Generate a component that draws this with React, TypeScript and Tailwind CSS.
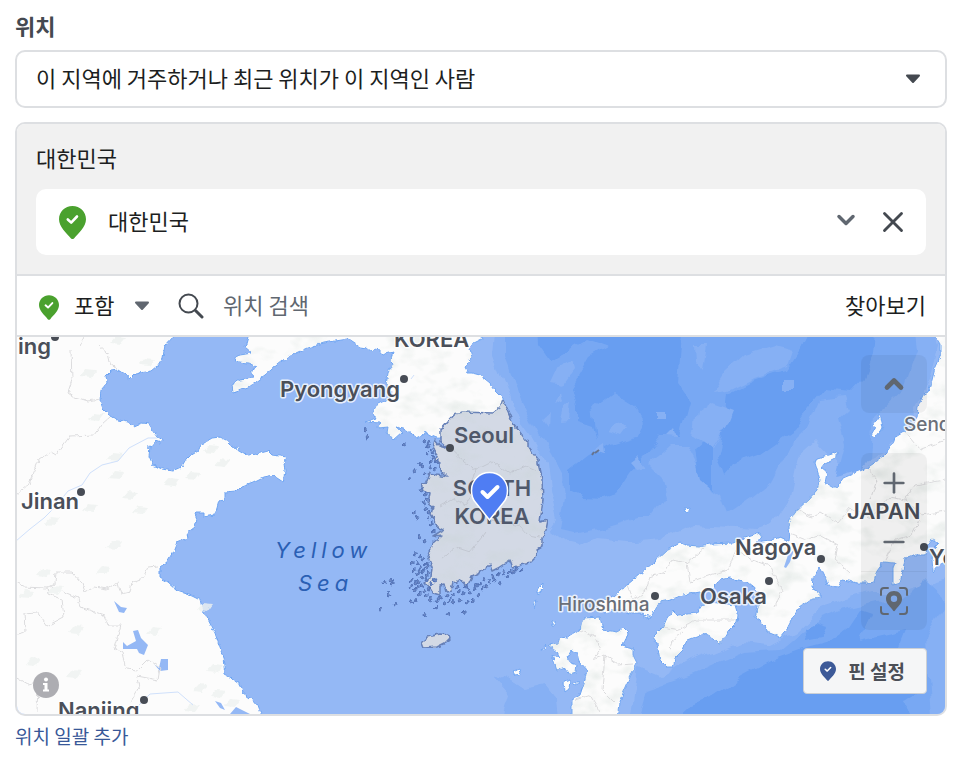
import { useState } from 'react';
import { ChevronDown, ChevronUp, Minus, Plus, X } from 'lucide-react';

const MAINLAND =
  'M10 330H175L173 337L165 346L163 358L158 366L152 371L140 373L135 374L130 379L124 374L118 370L111 371L106 376L107 383L101 390L100 400L103 409L110 416L118 420L128 422L135 426L142 423L149 424L153 430L158 437L163 440L161 443L155 441L150 447L149 456L153 465L162 469L173 471L182 467L186 460L190 456L198 451L201 445L212 438L220 437L226 440L232 446L240 450L248 455L257 454L268 451L272 455L287 457L284 463L285 472L283 482L277 478L273 475L263 477L253 482L242 486L236 492L225 493L225 500L219 501L215 515L203 517L203 512L197 512L195 514L197 519L195 527L187 533L188 538L177 542L173 552L167 562L160 567L160 577L168 582L177 590L192 595L200 599L202 608L215 633L223 657L225 675L240 683L243 693L253 700L258 706L263 720H10Z';

const NORTH_KOREA =
  'M247 330L248 337L245 347L252 353L240 355L235 357L238 362L248 363L257 367L250 372L253 378L240 380L232 385L233 392L248 387L265 375L277 365L287 357L307 348L323 343L348 339L360 347L367 348L372 352L377 348L383 355L393 352L390 360L393 363L388 373L386 385L392 394L387 400L377 405L373 413L376 418L365 422L380 423L378 428L388 427L387 433L393 440L402 432L396 427L407 430L417 438L427 433L434 437L446 440L480 425L503 410L503 398L495 390L490 383L480 375L472 373L468 373L465 367L472 357L470 350L473 343L485 337V330Z';

const SOUTH_KOREA =
  'M503 400L500 408L493 413L462 412L454 414L447 422L440 430L440 442L446 447L439 445L435 440L433 447L437 453L435 460L440 463L441 471L447 477L437 475L430 473L427 482L421 484L423 490L430 493L428 503L433 507L431 514L435 520L437 527L443 530L433 536L442 535L433 543L428 557L432 567L431 577L425 583L433 593L440 595L440 585L444 584L446 592L451 591L453 583L461 580L467 587L472 576L480 572L490 565L492 571L498 568L510 560L513 568L520 565L530 563L535 558L537 550L542 547L542 538L546 530L548 520L540 522L543 500L542 480L538 463L538 460L528 447L528 443L513 423Z';

const HONSHU =
  'M598 602L613 597L627 585L633 580L653 563L667 550L680 543L687 545L700 546L710 544L733 543L745 538L760 533L762 537L755 543L770 541L780 537L789 541L790 533L788 522L797 510L808 500L817 490L820 480L818 473L815 463L817 458L828 455L837 452L837 457L825 463L821 468L827 473L825 483L832 487L838 487L843 478L867 468L883 457L893 443L895 437L903 432L912 427L917 418L918 407L923 395L928 392L932 380L935 368L940 357L940 345L935 337V330H960V562L946 562L938 566L933 572L932 560L933 549L939 543L932 539L927 546L926 555L913 555L905 558L904 564L903 570L900 583L893 585L893 568L895 563L883 562L877 570L874 582L870 583L857 583L843 580L838 586L828 585L825 577L820 567L813 578L812 587L820 593L820 598L810 600L800 607L793 617L788 627L780 637L767 632L765 625L755 617L757 610L760 600L760 593L753 587L747 582L730 578L720 580L710 590L700 592L683 595L670 600L660 602L656 608L650 617L642 613L630 613L620 609L603 613L598 610Z';

const KYUSHU =
  'M583 618L600 617L603 630L617 632L623 628L628 633L625 642L621 645L633 648L633 655L637 663L630 677L623 693L620 703L618 720H572V700L580 695L585 680L587 670L580 662L578 653L572 650L568 657L570 663L577 665L576 673L570 675L565 668L557 671L552 655L558 658L558 653L548 645L558 643L560 637L567 638L580 630Z';

const SHIKOKU =
  'M673 610L678 615L697 613L702 605L710 602L735 605L738 615L737 623L727 633L720 645L713 638L703 633L700 635L687 640L683 650L675 658L673 667L667 667L660 660L657 643L653 637L663 627L667 618Z';

const JAPAN_ISLANDS =
  'M880 413L883 427L875 437L871 435L875 428L872 426L878 418ZM538 588L543 583L542 592L538 595ZM534 602L537 600L535 608ZM552 621H555V625H552ZM513 672L519 669L521 674L515 675ZM564 682L570 680L569 689L565 692ZM572 684L578 681L578 685ZM542 650L546 644L545 650ZM684 509L689 508L689 512L685 513ZM642 616L650 616L648 619ZM640 602L643 601L643 604Z';

const JEJU = 'M421 643L427 637L440 634L449 635L450 638L445 643L437 647L423 648Z';

// [x, y] of the islets scattered off the southern and western coasts
const ISLETS = [
  [365, 429], [367, 437], [403, 444], [424, 441], [428, 443], [430, 449], [427, 453], [432, 457], [436, 461], [419, 464],
  [414, 470], [408, 478], [422, 466], [429, 467], [434, 469], [424, 473], [421, 490], [425, 494], [427, 499], [423, 502],
  [413, 512], [416, 517], [428, 512], [430, 523], [419, 537], [424, 540], [432, 531], [415, 553], [419, 556], [411, 563],
  [417, 562], [422, 559], [425, 563], [420, 567], [424, 569], [413, 570], [428, 572], [417, 574], [410, 580], [415, 583],
  [421, 577], [425, 576], [418, 582], [410, 586], [414, 590], [422, 585], [428, 588], [419, 594], [411, 601], [415, 600],
  [425, 596], [430, 599], [436, 601], [435, 607], [441, 597], [447, 596], [452, 595], [444, 603], [453, 602], [458, 591],
  [463, 593], [459, 600], [466, 602], [470, 592], [474, 589], [479, 583], [484, 579], [478, 595], [471, 600], [486, 586],
  [492, 577], [497, 574], [503, 572], [507, 576], [512, 572], [516, 569], [499, 583], [521, 569], [384, 582], [391, 580],
  [392, 583], [388, 594], [395, 604], [380, 609], [425, 615], [448, 614], [463, 612], [434, 580], [456, 587], [465, 586],
  [427, 446], [433, 452], [430, 461], [426, 508], [428, 518], [422, 571], [426, 580], [430, 584], [417, 587], [424, 591],
  [438, 598], [449, 600], [468, 588], [476, 585], [481, 588], [489, 581], [494, 580], [509, 571], [427, 566], [418, 570],
];

const CITY_DOTS = [
  [81, 492], [404, 379], [450, 448], [655, 596], [769, 581], [821, 559], [924, 547], [144, 700], [55, 337],
];

const SHADES = [
  [35, 345], [118, 340], [88, 373], [147, 362], [96, 417], [115, 457], [90, 508], [130, 495], [117, 475], [171, 482],
  [193, 476], [52, 521], [140, 510], [44, 573], [114, 545], [103, 570], [55, 590], [27, 594], [205, 607], [76, 630],
  [154, 631], [33, 662], [74, 674], [215, 668], [200, 688], [218, 694], [232, 703], [192, 708], [211, 449], [222, 463],
];

interface IconProps {
  className: string;
}

function MarkerIcon({ className }: IconProps) {
  return (
    <svg viewBox="0 0 27 33" className={className} aria-hidden="true">
      <path
        d="M13.500 0C6 0 0 5.800 0 13.200C0 21 7.600 27 11.800 32.200Q13.500 34 15.200 32.200C19.400 27 27 21 27 13.200C27 5.800 21 0 13.500 0Z"
        fill="currentColor"
      />
      <path d="M8.800 13.500L12.200 16.600L18 10.500" fill="none" stroke="white" strokeWidth="2.600" strokeLinecap="round" strokeLinejoin="round" />
    </svg>
  );
}

function CaretIcon({ className }: IconProps) {
  return (
    <svg viewBox="0 0 16 10" className={className} aria-hidden="true">
      <path d="M2 1.500H14L8 8Z" fill="currentColor" stroke="currentColor" strokeWidth="2" strokeLinejoin="round" />
    </svg>
  );
}

function MapCanvas() {
  return (
    <svg
      viewBox="17 337 928 377"
      preserveAspectRatio="xMidYMid slice"
      className="block h-full w-full"
      role="img"
      aria-label="대한민국 지도"
    >
      <defs>
        <filter id="coast" x="0" y="0" width="100%" height="100%">
          <feTurbulence type="fractalNoise" baseFrequency="0.180" numOctaves="2" seed="4" result="noise" />
          <feDisplacementMap in="SourceGraphic" in2="noise" scale="5" xChannelSelector="R" yChannelSelector="G" />
        </filter>
        <filter id="depth" x="0" y="0" width="100%" height="100%">
          <feTurbulence type="fractalNoise" baseFrequency="0.050" numOctaves="2" seed="9" result="noise" />
          <feDisplacementMap in="SourceGraphic" in2="noise" scale="12" xChannelSelector="R" yChannelSelector="G" />
        </filter>
        <filter id="relief" x="0" y="0" width="100%" height="100%">
          <feTurbulence type="fractalNoise" baseFrequency="0.040 0.060" numOctaves="3" seed="21" />
          <feColorMatrix values="0 0 0 0 0.550  0 0 0 0 0.640  0 0 0 0 0.600  2.200 0 0 0 -1.050" result="hills" />
          <feComposite in="hills" in2="SourceAlpha" operator="in" />
        </filter>
      </defs>

      <rect x="0" y="320" width="980" height="410" fill="#94b8f5" />

      {/* Water depth */}
      <g filter="url(#depth)">
        <path
          fill="#86b0f4"
          d="M495 320L492 353L503 383L513 410L530 433L547 463L550 490L557 520L550 530L567 543L580 546L597 538L637 542L660 540L690 525L757 528L773 523L790 497L798 457L817 440L845 470L885 450L912 418L930 375L938 345L930 320Z"
        />
        <path
          fill="#78a8f3"
          d="M505 320V357L520 397L537 430L550 453L563 477L565 497L560 530L573 533L603 527L637 517L653 517L667 497L662 477L648 463L670 445L687 445L700 470L710 490L720 497L727 515L753 497L772 482L787 453L793 440L810 423L820 400L843 397L847 410L838 418L845 445L837 477L860 470L870 457L873 417L903 390L917 350L913 320Z"
        />
        <path
          fill="#679ef1"
          d="M537 320L538 345L550 362L562 355L570 350L587 340L607 347L590 357L577 380L573 387L578 407V422L593 427L597 440L593 407L613 392L637 407L645 422L637 437L610 445L587 457L570 470V490L583 497L603 498L617 493L630 473L650 450L660 437L680 437L690 400L678 383L683 320ZM800 350L810 330L875 320L872 355L862 380L850 393L823 390L807 410L793 430L760 453L733 463L723 475L717 457L723 430L727 393L753 380L773 373L787 370ZM700 480L695 450L712 435L712 490Z"
        />
        <path
          fill="#86b0f4"
          d="M551 383L558 368L572 361L574 369L562 385ZM561 420L565 405L572 404L570 419ZM553 405L561 392L563 401ZM542 420L548 415L547 427ZM606 431L615 423L628 427L622 435ZM592 452L603 445L604 456ZM629 462L636 457L646 468L636 470ZM657 412H664V419H657ZM668 437L675 430L678 438ZM712 392L725 372L745 354L775 345L793 350L788 365L752 378L727 390ZM694 345H708L704 372L695 362ZM693 435L697 412L712 402L734 410L728 425L713 449ZM785 380H793V388H785Z"
        />
        <path fill="#86b0f4" d="M628 730L637 668L660 678L690 660L715 652L740 642L770 645L795 632L820 608L870 592L902 592L960 575V730ZM492 675L510 680L525 690L545 685L557 700L560 730H500L510 695Z" />
        <path fill="#78a8f3" d="M636 730L647 690L690 675L720 662L745 652L780 650L810 625L840 610L875 602L905 600L925 580L946 600L925 640L932 730Z" />
        <path fill="#679ef1" d="M664 730L690 705L715 695L743 676L777 658L800 650L827 643L848 628L860 610L872 614L860 640L905 630L895 655L920 690L905 700L920 730ZM805 627L815 622L828 626L822 637L807 640Z" />
      </g>

      <path d="M595 453L599 450M592 455L594 452" stroke="#66748f" strokeWidth="2" />

      {/* Land */}
      <g filter="url(#coast)" fill="#fcfcfc" stroke="#6fa5f2" strokeWidth="1">
        <path d={MAINLAND} />
        <path d={NORTH_KOREA} />
        <path d={HONSHU} />
        <path d={KYUSHU} />
        <path d={SHIKOKU} />
        <path d={JAPAN_ISLANDS} />
      </g>
      <path d={SOUTH_KOREA + JEJU} filter="url(#coast)" fill="#d3d9e5" stroke="#6680b8" strokeWidth="1.500" strokeLinejoin="round" />

      <g filter="url(#relief)" opacity="0.400">
        <path d={NORTH_KOREA} />
        <path d={HONSHU} />
        <path d={KYUSHU} />
        <path d={SHIKOKU} />
        <path d={SOUTH_KOREA} opacity="0.700" />
      </g>
      <g filter="url(#coast)" fill="#eef2f0" opacity="0.800">
        {SHADES.map(([x, y]) => (
          <path key={`${x}-${y}`} d={`M${x - 8} ${y + 3}L${x - 2} ${y - 4}L${x + 8} ${y - 3}L${x + 3} ${y + 4}Z`} />
        ))}
      </g>

      {/* Islets */}
      <g filter="url(#coast)" fill="#6f8bc6" stroke="#5475ba" strokeWidth="1">
        {ISLETS.map(([x, y], index) => (
          <path key={index} d={`M${x - 1} ${y + 1}L${x + (index % 3)} ${y - 2}L${x + 2} ${y + 1}L${x} ${y + 2}Z`} />
        ))}
      </g>

      {/* Lakes and rivers */}
      <g fill="#94b8f5">
        <path d="M114 601L121 607L127 608L124 613L119 612ZM133 631L138 630L141 638L148 645L144 655L139 653L137 649L123 649V642L127 646L136 641ZM154 664L159 668L161 659H168V670L160 671ZM215 701L221 703L225 710L220 708ZM230 714L236 707L250 714ZM784 567L788 555L794 550L790 562L786 568Z" />
        <path
          fill="none"
          stroke="#cfe0fb"
          d="M16 541L30 529L44 518L55 507L68 491L82 485L90 473L102 465L118 461L129 448L148 438L157 438M138 706L150 694L178 692L193 705M411 379L414 375"
        />
      </g>

      {/* Province borders */}
      <g fill="none" stroke="#dcdcde" strokeWidth="1" filter="url(#coast)">
        <path d="M16 495L29 484L39 460L51 452L56 455L70 436L94 435L102 424L110 417M71 350L72 380L68 392L75 397L88 401L100 399M80 345L84 337M98 345L108 354L110 363L117 368M16 580L22 587L47 588L55 584L56 572L72 572L82 583L85 592L95 587L107 589L118 583L121 594L130 592L132 582L143 578L148 567L158 566M47 588L48 594L62 600L64 617L47 626L37 612L24 613L25 632L17 634M62 591L78 598L80 607L104 615L108 625L121 625L114 648L122 653L126 669L138 670L148 660L160 668L158 680L137 676L139 688L130 703M16 677L28 684L38 682L37 712" />
        <path
          stroke="#c3c8d2"
          d="M450 448L465 462L476 470L492 462L510 473L526 466L537 471M440 506L453 499L465 505L474 492L486 505L489 520L505 522L520 526L528 535L540 537M440 560L455 547L470 552L486 532M476 470L470 485L482 494"
        />
        <path d="M627 585L633 600L645 592L650 577L665 572L672 560L687 563L705 548M687 563L690 582L710 575L728 570L736 550M736 550L752 560L770 566L782 590L775 607M790 534L805 540L820 535L838 545L835 560L850 573M797 510L812 517L820 512L838 523L850 508L872 518L890 497L905 500L915 485L945 480M867 468L877 480L870 500M905 432L920 450L945 440M905 500L922 515L945 511M885 560L895 540L912 535L920 520M663 627L680 630L695 620L737 620M670 650L672 640L683 632M580 630L595 637L600 650L592 660L605 655L618 665L633 664M605 655L602 690L615 703M575 700L590 695L600 712" />
      </g>

      <g fill="#474c55">
        {CITY_DOTS.map(([x, y]) => (
          <circle key={`${x}-${y}`} cx={x} cy={y} r="4" />
        ))}
      </g>

      <g
        className="font-['Inter','Liberation_Sans',sans-serif] text-[22px] font-semibold"
        fill="#4a4f59"
        stroke="#ffffff"
        strokeOpacity="0.800"
        strokeWidth="3"
        strokeLinejoin="round"
        paintOrder="stroke"
      >
        <text x="18" y="354">ing</text>
        <text x="280" y="397">Pyongyang</text>
        <text x="21" y="509">Jinan</text>
        <text x="58" y="718">Nanjing</text>
        <text x="735" y="555">Nagoya</text>
        <text x="700" y="604">Osaka</text>
        <text x="929" y="565">Yokohama</text>
        <text x="394" y="347">KOREA</text>
        <text x="847" y="519">JAPAN</text>
        <g stroke="none" fill="#4f586b">
          <text x="454" y="443">Seoul</text>
          <text x="492" y="496" textAnchor="middle">SOUTH</text>
          <text x="492" y="524" textAnchor="middle">KOREA</text>
        </g>
        <g className="text-[19px] font-medium" fill="#6a6f78">
          <text x="558" y="611">Hiroshima</text>
          <text x="904" y="431">Sendai</text>
        </g>
        <g className="text-[22px] font-normal italic tracking-[5px]" fill="#2a5fb4" stroke="none">
          <text x="275" y="558">Yellow</text>
          <text x="298" y="591">Sea</text>
        </g>
      </g>

      <path
        d="M489.500 520L476 503C473 500 471.500 495 471.500 490.500A18 18 0 0 1 507.500 490.500C507.500 495 506 500 503 503Z"
        fill="#4f7df3"
        stroke="white"
        strokeWidth="1.500"
      />
      <path d="M482.500 492L487.500 497L497.500 487" fill="none" stroke="white" strokeWidth="4" strokeLinecap="round" strokeLinejoin="round" />
    </svg>
  );
}

function LocationMap() {
  return (
    <div className="relative h-[377px] overflow-hidden">
      <MapCanvas />

      <button
        type="button"
        aria-label="지도 접기"
        className="absolute top-[18px] right-[18px] flex h-[58px] w-[66px] items-center justify-center rounded-lg bg-black/5 text-[#606770]"
      >
        <ChevronUp className="size-7" strokeWidth={4} />
      </button>

      <div className="absolute top-[116px] right-[18px] flex w-[66px] flex-col overflow-hidden rounded-lg bg-black/5 text-[#606770]">
        <button type="button" aria-label="확대" className="flex h-[59px] items-center justify-center">
          <Plus className="size-8" strokeWidth={2} />
        </button>
        <button type="button" aria-label="축소" className="flex h-[59px] items-center justify-center">
          <Minus className="size-8" strokeWidth={2} />
        </button>
        <button type="button" aria-label="현재 위치" className="flex h-[59px] items-center justify-center border-t border-black/5">
          <svg viewBox="0 0 28 28" className="size-7" fill="none" stroke="currentColor" strokeWidth="2" strokeLinecap="round" aria-hidden="true">
            <path d="M1 8V4Q1 1 4 1H8M20 1H24Q27 1 27 4V8M27 20V24Q27 27 24 27H20M8 27H4Q1 27 1 24V20" />
            <path
              fill="currentColor"
              stroke="none"
              fillRule="evenodd"
              d="M14 4C9.300 4 6 7.500 6 12C6 17 11 20 13 23.500Q14 25 15 23.500C17 20 22 17 22 12C22 7.500 18.700 4 14 4ZM14 8.500A3.200 3.200 0 1 1 14 14.900A3.200 3.200 0 1 1 14 8.500Z"
            />
          </svg>
        </button>
      </div>

      <button type="button" aria-label="지도 정보" className="absolute bottom-4 left-4 size-[26px] rounded-full bg-[#adadb2] text-white">
        <svg viewBox="0 0 26 26" className="size-full" fill="currentColor" aria-hidden="true">
          <circle cx="13" cy="7.500" r="2" />
          <path d="M10 11H14.500V17.500H16V19.500H10V17.500H11.500V13H10Z" />
        </svg>
      </button>

      <button
        type="button"
        className="absolute right-[18px] bottom-5 flex h-[46px] items-center gap-3 rounded-sm border border-[#ccd0d5] bg-[#f5f6f7] pr-[21px] pl-4 text-[19px] font-bold text-[#4b4f56]"
      >
        <MarkerIcon className="h-5 w-4 text-[#3d5a98]" />
        핀 설정
      </button>
    </div>
  );
}

function App() {
  const [query, setQuery] = useState('');

  return (
    <main className="bg-white pt-[10px] pr-[19px] pb-2 pl-[15px] font-['Noto_Sans_CJK_KR',sans-serif] text-[22px] leading-[30px] text-[#1c1e21]">
      <label htmlFor="location-type" className="mb-[10px] block font-bold text-[#444950]">
        위치
      </label>
      <div className="relative mb-[14px]">
        <select
          id="location-type"
          className="block h-[58px] w-full appearance-none rounded-[10px] border-2 border-[#dddfe2] bg-white pr-14 pb-1 pl-[19px]"
        >
          <option>이 지역에 거주하거나 최근 위치가 이 지역인 사람</option>
        </select>
        <CaretIcon className="pointer-events-none absolute top-6 right-[26px] h-[10px] w-4 text-[#444950]" />
      </div>

      <section className="overflow-hidden rounded-[10px] border-2 border-[#dddfe2]">
        {/* Selected locations */}
        <div className="border-b-2 border-[#dddfe2] bg-[#f1f1f1] px-[19px] pt-[18px] pb-[19px]">
          <h2 className="mb-[17px]">대한민국</h2>
          <div className="flex h-[66px] items-center rounded-[10px] bg-white pr-4 pl-[23px]">
            <MarkerIcon className="h-[33px] w-[27px] text-[#4aa12e]" />
            <span className="ml-[22px] flex-1 pb-1">대한민국</span>
            <button type="button" aria-label="반경 옵션" className="mr-4 pb-1 text-[#606770]">
              <ChevronDown className="size-7" strokeWidth={3} />
            </button>
            <button type="button" aria-label="삭제" className="text-[#444950]">
              <X className="size-[34px]" strokeWidth={2} />
            </button>
          </div>
        </div>

        {/* Search */}
        <div className="flex h-[61px] items-center border-b-2 border-[#dddfe2] pr-[19px] pl-[22px]">
          <MarkerIcon className="mt-1 h-[25px] w-5 text-[#4aa12e]" />
          <div className="relative ml-[15px] flex items-center">
            <select aria-label="포함 여부" className="w-[76px] appearance-none bg-transparent pb-1">
              <option>포함</option>
            </select>
            <CaretIcon className="pointer-events-none absolute right-0 h-[10px] w-4 text-[#606770]" />
          </div>
          <svg viewBox="0 0 26 26" className="ml-7 size-[26px] text-[#444950]" fill="none" stroke="currentColor" strokeLinecap="round" aria-hidden="true">
            <circle cx="10.500" cy="10.500" r="9" strokeWidth="2" />
            <path d="M17.500 17.500L24 24" strokeWidth="3" />
          </svg>
          <input
            type="text"
            aria-label="위치 검색"
            placeholder="위치 검색"
            value={query}
            onChange={(event) => setQuery(event.target.value)}
            className="ml-[19px] min-w-0 flex-1 pb-1 outline-none placeholder:text-[#606770]"
          />
          <button type="button" className="pb-1">찾아보기</button>
        </div>

        <LocationMap />
      </section>

      <a href="#bulk" className="mt-[6px] inline-block text-[19px] leading-7 text-[#385898]">
        위치 일괄 추가
      </a>
    </main>
  );
}

export default App;
